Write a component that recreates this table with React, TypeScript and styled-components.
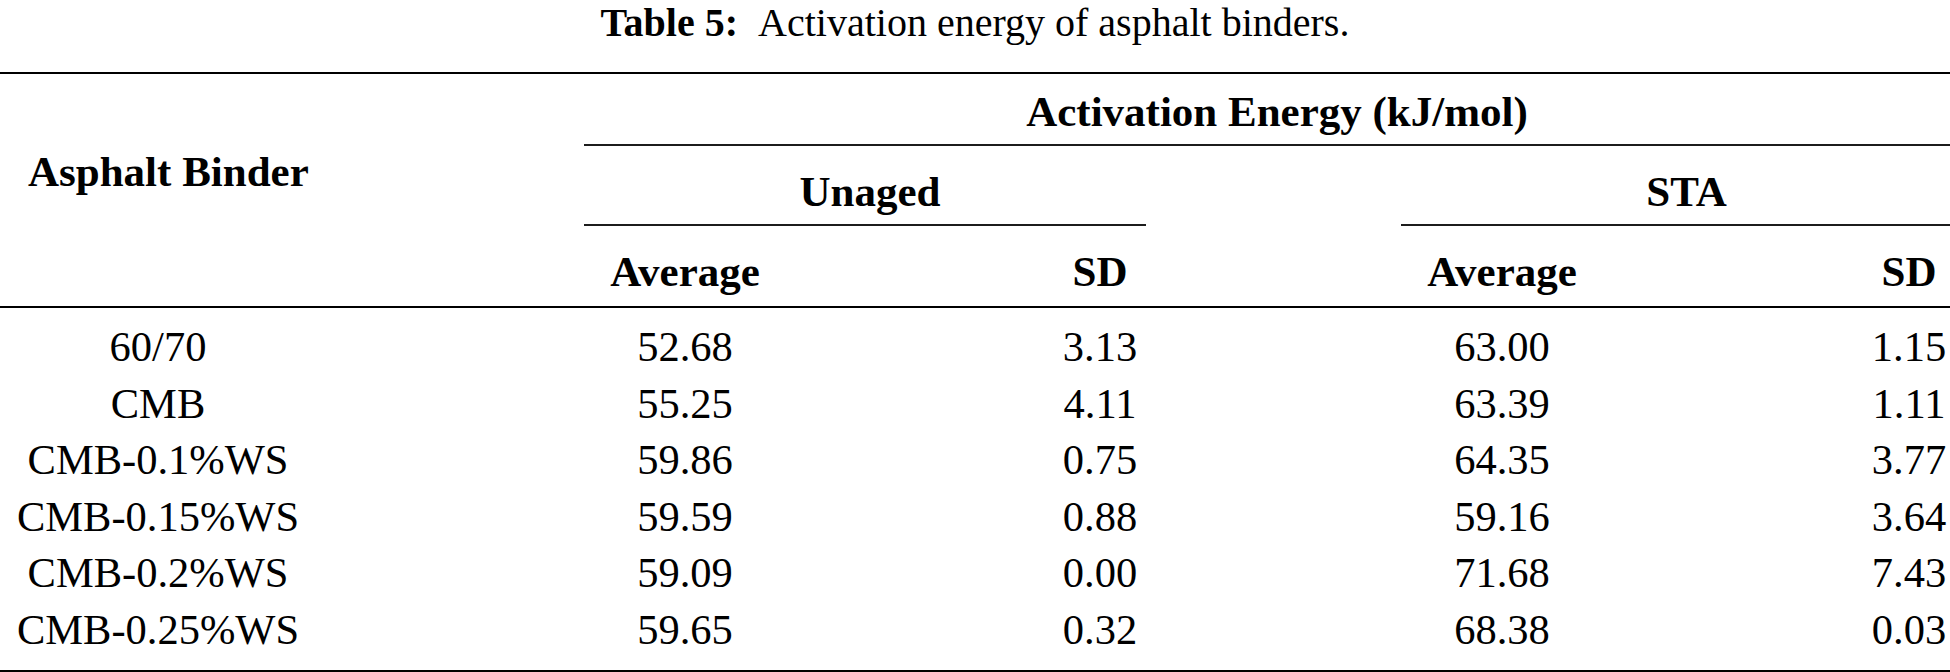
import React from "react";
import styled, { createGlobalStyle } from "styled-components";

const COLS = "316px 268px 202px 268px 92px 255px 202px 265px 82px";

const GlobalStyle = createGlobalStyle`
  html, body {
    margin: 0;
    padding: 0;
    background: #ffffff;
  }
  body {
    font-family: "Liberation Serif", "Times New Roman", serif;
    color: #000000;
  }
`;

const Page = styled.div`
  width: 1950px;
`;

const Caption = styled.div`
  text-align: center;
  font-size: 40px;
  line-height: 45px;
  margin-bottom: 27px;
`;

const CaptionLabel = styled.span`
  font-weight: 700;
  margin-right: 0.5em;
`;

const Table = styled.div`
  border-top: 2px solid #000;
  border-bottom: 2px solid #000;
`;

const HeadGrid = styled.div`
  display: grid;
  grid-template-columns: ${COLS};
  grid-template-rows: 72px 80px 80px;
  border-bottom: 2px solid #000;
`;

const HeadCell = styled.div<{ $col: string; $row: number; $rule?: boolean; $shift?: number }>`
  grid-column: ${(p) => p.$col};
  grid-row: ${(p) => p.$row};
  align-self: end;
  font-weight: 700;
  font-size: 43px;
  line-height: 48px;
  text-align: center;
  white-space: nowrap;
  padding-bottom: 8px;
  padding-left: ${(p) => p.$shift ?? 0}px;
  border-bottom: ${(p) => (p.$rule ? "2px solid #1c1c1c" : "0")};
`;

const ColHead = styled(HeadCell)`
  padding-bottom: 10px;
`;

const StubHead = styled.div`
  grid-column: 1;
  grid-row: 1 / span 3;
  align-self: start;
  font-weight: 700;
  font-size: 43px;
  line-height: 48px;
  white-space: nowrap;
  padding-top: 74px;
  padding-left: 28px;
`;

const Body = styled.div`
  padding: 11px 0 12px;
`;

const Row = styled.div`
  display: grid;
  grid-template-columns: ${COLS};
  height: 56.5px;
  font-size: 42.5px;
  line-height: 56.5px;
`;

const Cell = styled.div<{ $col: number }>`
  grid-column: ${(p) => p.$col};
  text-align: center;
  white-space: nowrap;
`;

const rows: [string, string, string, string, string][] = [
  ["60/70", "52.68", "3.13", "63.00", "1.15"],
  ["CMB", "55.25", "4.11", "63.39", "1.11"],
  ["CMB-0.1%WS", "59.86", "0.75", "64.35", "3.77"],
  ["CMB-0.15%WS", "59.59", "0.88", "59.16", "3.64"],
  ["CMB-0.2%WS", "59.09", "0.00", "71.68", "7.43"],
  ["CMB-0.25%WS", "59.65", "0.32", "68.38", "0.03"],
];

const cellCols = [1, 3, 5, 7, 9];

export default function App() {
  return (
    <Page>
      <GlobalStyle />
      <Caption>
        <CaptionLabel>Table 5:</CaptionLabel>Activation energy of asphalt binders.
      </Caption>
      <Table>
        <HeadGrid>
          <StubHead>Asphalt Binder</StubHead>
          <HeadCell $col="3 / 10" $row={1} $rule $shift={20}>
            Activation Energy (kJ/mol)
          </HeadCell>
          <HeadCell $col="3 / 6" $row={2} $rule $shift={10}>
            Unaged
          </HeadCell>
          <HeadCell $col="7 / 10" $row={2} $rule $shift={22}>
            STA
          </HeadCell>
          <ColHead $col="3" $row={3}>Average</ColHead>
          <ColHead $col="5" $row={3}>SD</ColHead>
          <ColHead $col="7" $row={3}>Average</ColHead>
          <ColHead $col="9" $row={3}>SD</ColHead>
        </HeadGrid>
        <Body>
          {rows.map((r) => (
            <Row key={r[0]}>
              {r.map((v, i) => (
                <Cell key={i} $col={cellCols[i]}>
                  {v}
                </Cell>
              ))}
            </Row>
          ))}
        </Body>
      </Table>
    </Page>
  );
}
